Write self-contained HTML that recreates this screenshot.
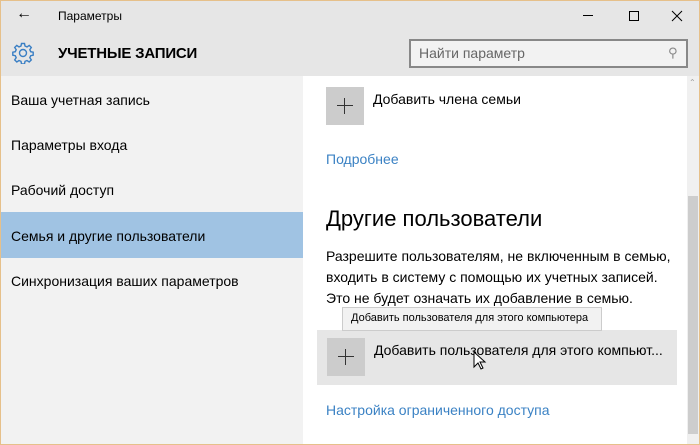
<!DOCTYPE html>
<html><head><meta charset="utf-8"><style>
*{margin:0;padding:0;box-sizing:border-box}
body{width:700px;height:445px;overflow:hidden;font-family:"Liberation Sans","DejaVu Sans",sans-serif;background:#e6c08a;position:relative}
.win{position:absolute;left:1px;top:1px;width:698px;height:443px;background:#f2f2f2;overflow:hidden}
.hdr{position:absolute;left:0;top:0;width:698px;height:75px;background:#e6e6e6}
.t{position:absolute;color:#000;white-space:nowrap}
.nav{position:absolute;left:10px;font-size:14px;color:#000}
.sel{position:absolute;left:0;top:211px;width:302px;height:46px;background:#a0c3e3}
.cont{position:absolute;left:302px;top:75px;width:396px;height:368px;background:#fff}
.plus{position:absolute;width:38px;height:38px;background:#cccccc}
.plus:before{content:"";position:absolute;left:11px;top:18px;width:16px;height:1px;background:#333}
.plus:after{content:"";position:absolute;left:18px;top:11px;width:1px;height:16px;background:#333}
.link{color:#3b82c4;font-size:14px;position:absolute}
</style></head><body><div class="win">
<div class="hdr">
<div class="t" style="left:15px;top:4px;font-size:16px">&#8592;</div>
<div class="t" style="left:57px;top:8px;font-size:12px">Параметры</div>
<div style="position:absolute;left:582px;top:14px;width:10px;height:1px;background:#000"></div>
<div style="position:absolute;left:628px;top:10px;width:10px;height:10px;border:1px solid #000"></div>
<svg style="position:absolute;left:670px;top:9px" width="12" height="12"><path d="M1 1L11 11M11 1L1 11" stroke="#000" stroke-width="1"/></svg>
<svg style="position:absolute;left:11px;top:41px" width="22" height="22" viewBox="0 0 22 22"><g fill="none" stroke="#3a7fc4" stroke-width="1.4"><circle cx="11" cy="11" r="3.5"/><path d="M9.5 1.5h3l.5 2.5 2 .9 2.2-1.5 2.1 2.1-1.5 2.2.9 2 2.5.5v3l-2.5.5-.9 2 1.5 2.2-2.1 2.1-2.2-1.5-2 .9-.5 2.5h-3l-.5-2.5-2-.9-2.2 1.5-2.1-2.1 1.5-2.2-.9-2-2.5-.5v-3l2.5-.5.9-2-1.5-2.2 2.1-2.1 2.2 1.5 2-.9z"/></g></svg>
<div class="t" style="left:57px;top:44px;font-size:15px;font-weight:bold;letter-spacing:-.2px">УЧЕТНЫЕ ЗАПИСИ</div>
<div style="position:absolute;left:408px;top:38px;width:279px;height:29px;border:2px solid #888;background:#f2f2f2"></div>
<div class="t" style="left:418px;top:44px;font-size:14px;color:#666">Найти параметр</div>
<div class="t" style="left:667px;top:44px;font-size:13px;color:#888">&#9906;</div>
</div>
<div class="sel"></div>
<div class="nav" style="top:91px">Ваша учетная запись</div>
<div class="nav" style="top:136px">Параметры входа</div>
<div class="nav" style="top:181px">Рабочий доступ</div>
<div class="nav" style="top:227px">Семья и другие пользователи</div>
<div class="nav" style="top:272px">Синхронизация ваших параметров</div>
<div class="cont">
<div class="plus" style="left:23px;top:11px"></div>
<div class="t" style="left:70px;top:15px;font-size:14px">Добавить члена семьи</div>
<div class="link" style="left:23px;top:75px">Подробнее</div>
<div class="t" style="left:23px;top:130px;font-size:22px">Другие пользователи</div>
<div class="t" style="left:23px;top:170px;font-size:14px;line-height:21px">Разрешите пользователям, не включенным в семью,<br>входить в систему с помощью их учетных записей.<br>Это не будет означать их добавление в семью.</div>
<div style="position:absolute;left:14px;top:254px;width:360px;height:55px;background:#e6e6e6"></div>
<div class="plus" style="left:24px;top:262px"></div>
<div class="t" style="left:71px;top:266px;font-size:14px">Добавить пользователя для этого компьют...</div>
<div style="position:absolute;left:39px;top:231px;width:260px;height:24px;background:#f2f2f2;border:1px solid #ccc"></div>
<div class="t" style="left:48px;top:236px;font-size:11px">Добавить пользователя для этого компьютера</div>
<svg style="position:absolute;left:170px;top:275px" width="14" height="20" viewBox="0 0 14 20"><path d="M1 1v15l4-4 3 6 2-1-3-6h5z" fill="#fff" stroke="#000"/></svg>
<div class="link" style="left:23px;top:326px">Настройка ограниченного доступа</div>
<div style="position:absolute;left:384px;top:0;width:12px;height:368px;background:#f0f0f0"></div>
<div style="position:absolute;left:385px;top:120px;width:10px;height:238px;background:#cdcdcd"></div>
<div class="t" style="left:386px;top:2px;font-size:8px;color:#999">&#8963;</div>
</div>
</div></body></html>
